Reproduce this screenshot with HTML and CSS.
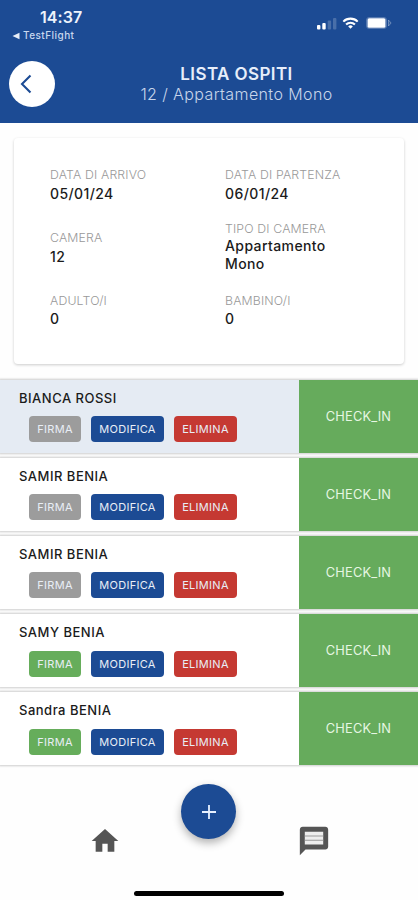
FILE: index.html
```html
<!DOCTYPE html>
<html lang="it">
<head>
<meta charset="utf-8">
<meta name="viewport" content="width=device-width, initial-scale=1">
<title>Lista ospiti</title>
<link rel="stylesheet" href="styles.css">
</head>
<body>
<div class="app">
  <header class="header">
    <div class="status">
      <div class="status-left">
        <div class="clock">14:37</div>
        <div class="back-app"><svg width="8" height="8" viewBox="0 0 8 8"><path d="M7.5 .8v6.4L.5 4z" fill="#e6edf8"/></svg><span>TestFlight</span></div>
      </div>
      <div class="status-icons">
        <svg width="20" height="13" viewBox="0 0 20 13"><g fill="#fff"><rect x="0" y="8" width="3.4" height="4.5" rx="1"/><rect x="5.3" y="6" width="3.4" height="6.5" rx="1"/><rect x="10.7" y="3.5" width="3.4" height="9" rx="1" opacity=".2"/><rect x="16" y="1" width="3.4" height="11.5" rx="1" opacity=".2"/></g></svg>
        <svg width="17" height="12" viewBox="0 0 18 13"><g fill="none" stroke="#fff" stroke-width="2.2"><path d="M1.2 5a11 11 0 0 1 15.6 0"/><path d="M4.2 8.1a6.8 6.8 0 0 1 9.6 0"/></g><path d="M9 12.8 6.5 10.3a3.5 3.5 0 0 1 5 0z" fill="#fff"/></svg>
        <svg width="27" height="12" viewBox="0 0 27 12"><rect x=".5" y=".5" width="20" height="11" rx="2.500" fill="none" stroke="#fff" stroke-opacity=".25"/><rect x="1.500" y="1.300" width="18" height="9.400" rx="1.500" fill="#fff"/><path d="M22.500 3v6l2.600-3z" fill="#fff" fill-opacity=".1" stroke="#fff" stroke-opacity=".3"/></svg>
      </div>
    </div>
    <div class="title-bar">
      <button class="back" aria-label="Indietro"><svg width="14" height="20" viewBox="0 0 14 20"><path d="M11.500 1.500 3 10l8.500 8.500" fill="none" stroke="#1c4b94" stroke-width="2.100"/></svg></button>
      <div class="titles">
        <h1>LISTA OSPITI</h1>
        <p>12 / Appartamento Mono</p>
      </div>
    </div>
  </header>
  <section class="card">
    <div class="field"><span class="label">DATA DI ARRIVO</span><span class="value">05/01/24</span></div>
    <div class="field"><span class="label">DATA DI PARTENZA</span><span class="value">06/01/24</span></div>
    <div class="field"><span class="label">CAMERA</span><span class="value">12</span></div>
    <div class="field room-type"><span class="label">TIPO DI CAMERA</span><span class="value">Appartamento<br>Mono</span></div>
    <div class="field"><span class="label">ADULTO/I</span><span class="value">0</span></div>
    <div class="field"><span class="label">BAMBINO/I</span><span class="value">0</span></div>
  </section>
  <main class="guests">
    <article class="guest selected"><div class="info"><h2>BIANCA ROSSI</h2><div class="actions"><button class="btn sign">FIRMA</button><button class="btn edit">MODIFICA</button><button class="btn del">ELIMINA</button></div></div><button class="checkin">CHECK_IN</button></article>
    <article class="guest"><div class="info"><h2>SAMIR BENIA</h2><div class="actions"><button class="btn sign">FIRMA</button><button class="btn edit">MODIFICA</button><button class="btn del">ELIMINA</button></div></div><button class="checkin">CHECK_IN</button></article>
    <article class="guest"><div class="info"><h2>SAMIR BENIA</h2><div class="actions"><button class="btn sign">FIRMA</button><button class="btn edit">MODIFICA</button><button class="btn del">ELIMINA</button></div></div><button class="checkin">CHECK_IN</button></article>
    <article class="guest"><div class="info"><h2>SAMY BENIA</h2><div class="actions"><button class="btn sign ready">FIRMA</button><button class="btn edit">MODIFICA</button><button class="btn del">ELIMINA</button></div></div><button class="checkin">CHECK_IN</button></article>
    <article class="guest"><div class="info"><h2>Sandra BENIA</h2><div class="actions"><button class="btn sign ready">FIRMA</button><button class="btn edit">MODIFICA</button><button class="btn del">ELIMINA</button></div></div><button class="checkin">CHECK_IN</button></article>
  </main>
  <nav class="tabs">
    <a class="tab"><svg width="32" height="32" viewBox="0 0 24 24"><path d="M10 20v-6h4v6h5v-8h3L12 3 2 12h3v8z" fill="#555"/></svg></a>
    <button class="add" aria-label="Aggiungi"><svg width="14" height="14" viewBox="0 0 14 14"><path d="M7 0v14M0 7h14" stroke="#e8f1ff" stroke-width="1.800"/></svg></button>
    <a class="tab"><svg width="34" height="34" viewBox="0 0 24 24"><path d="M4 4h16v12H4z" fill="#eee"/><path fill-rule="evenodd" d="M20 2H4c-1.100 0-2 .9-2 2v18l4-4h14c1.100 0 2-.9 2-2V4c0-1.100-.9-2-2-2zm-1.500 12.500h-13v-9h13z" fill="#555"/><path d="M5.500 8.500h13M5.500 11.500h13" stroke="#999" stroke-width=".8"/></svg></a>
  </nav>
  <div class="home-indicator"></div>
</div>
</body>
</html>
```
FILE: styles.css
```css
* { box-sizing: border-box; }
body { margin: 0; background: #fefefe; font-family: Inter, "Liberation Sans", sans-serif; }
button { border: 0; padding: 0; font: inherit; }
h1, h2, p { margin: 0; }
svg { display: block; }
.app { width: 418px; height: 900px; display: flex; flex-direction: column; overflow: hidden; }
.header { height: 123px; flex: none; background: #1c4b94; }
.status { height: 60px; display: flex; justify-content: space-between; }
.status-left { padding: 7px 0 0 12px; }
.clock { padding-left: 28px; font-size: 16px; line-height: 20px; font-weight: 600; color: #edf3fc; letter-spacing: .1px; }
.back-app { display: flex; align-items: center; gap: 3px; margin-top: 2px; font-size: 10px; line-height: 13px; font-weight: 500; color: #c9d8ef; letter-spacing: .45px; }
.status-icons { display: flex; gap: 5px; padding: 17px 25px 0 0; }
.status-icons svg:nth-child(2) { margin-right: 2px; }
.title-bar { display: flex; padding-left: 9px; align-items: flex-start; }
.back { flex: none; width: 46px; height: 46px; margin-top: 1px; border-radius: 50%; background: #fff; display: flex; align-items: center; justify-content: center; padding-right: 12px; }
.titles { flex: 1; text-align: center; padding-top: 4px; white-space: nowrap; }
.titles h1 { font-size: 17px; line-height: 20px; font-weight: 600; color: #e7eefa; letter-spacing: .4px; }
.titles p { font-size: 16px; line-height: 20px; font-weight: 300; color: #c8d6eb; letter-spacing: .4px; }
.card { flex: none; height: 226px; margin: 15px 14px 0; padding: 28px 36px 0; background: #fff; border-radius: 4px; box-shadow: 0 1px 3px rgba(0,0,0,.2); display: grid; grid-template-columns: 175px 1fr; grid-template-rows: 50px 63px 62px; }
.field { display: flex; flex-direction: column; align-self: center; line-height: 18px; }
.field:nth-child(-n+2) { align-self: start; }
.room-type { margin-top: -2px; }
.room-type .label { line-height: 17px; }
.label { font-size: 12.300px; line-height: 18.500px; font-weight: 300; color: #999; letter-spacing: .15px; }
.value { font-size: 14px; font-weight: 500; color: #1b1b1b; letter-spacing: .4px; }
.guests { flex: none; margin-top: 15.500px; display: flex; flex-direction: column; gap: 5.200px; }
.guest { height: 73px; display: flex; background: #fff; box-shadow: 0 0 2px 1px rgba(0,0,0,.2); }
.selected .info { background: #e5ebf3; }
.info { width: 299px; padding: 9px 0 0 19px; }
.info h2 { font-size: 13px; line-height: 19px; font-weight: 500; color: #1b1b1b; letter-spacing: .5px; }
.actions { display: flex; gap: 10px; padding: 8.500px 0 0 10px; }
.btn { height: 26px; border-radius: 4px; color: #e9eef6; font-size: 11px; letter-spacing: .3px; }
.sign { width: 52px; background: #9c9c9c; }
.ready { background: #66ad5b; }
.edit { width: 73px; background: #1c4b94; }
.del { width: 63px; background: #c53932; }
.checkin { flex: 1; background: #66ab5c; color: #e6f7e3; font-size: 12.800px; letter-spacing: .2px; }
.tabs { flex: none; height: 120px; display: grid; grid-template-columns: 181px 55px 1fr; align-items: start; }
.tab { padding: 60px 0 0 89px; }
.tab:last-child { padding: 59px 0 0 61px; }
.add { width: 55px; height: 55px; margin-top: 19px; border-radius: 50%; background: #1c4b94; display: flex; align-items: center; justify-content: center; box-shadow: 0 4px 8px rgba(0,0,0,.3); }
.home-indicator { flex: none; width: 150px; height: 5px; margin: 6px 0 0 134px; border-radius: 3px; background: #000; }
```
